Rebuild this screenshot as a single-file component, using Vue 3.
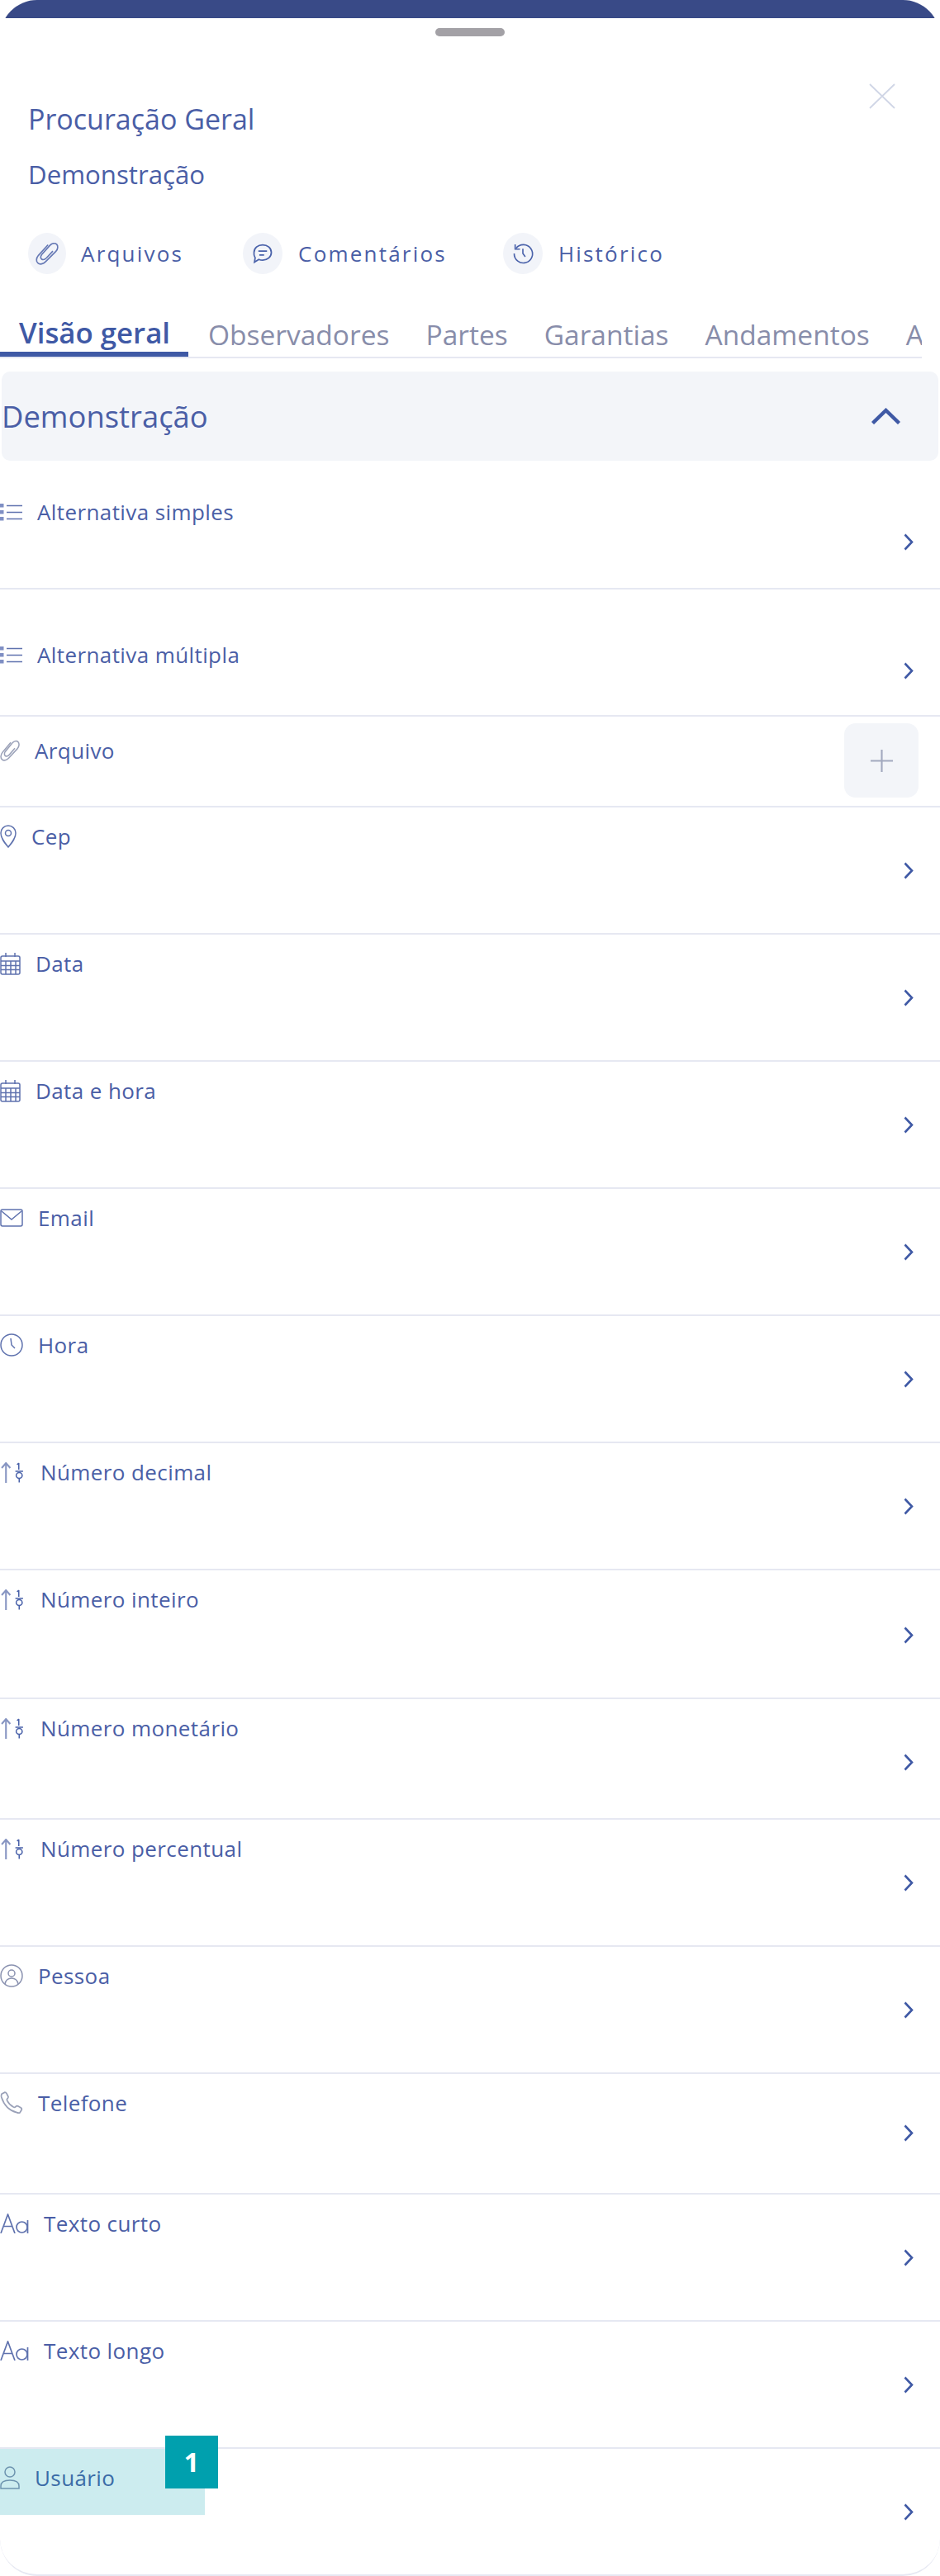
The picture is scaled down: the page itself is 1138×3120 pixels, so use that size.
<script setup>
const tabs = ['Observadores', 'Partes', 'Garantias', 'Andamentos', 'Agenda']

const boxes = {
  list: '0 0 27 21',
  clip: '0 0 24 24',
  pin: '0 0 20 28',
  calendar: '0 0 25 27',
  mail: '0 0 28 22',
  clock: '0 0 28 28',
  number: '0 0 30 25',
  person: '0 0 28 28',
  phone: '0 0 24 24',
  text: '0 0 35 24',
  user: '0 0 24 28'
}

const fields = [
  { label: 'Alternativa simples', icon: 'list', kind: 'alt first' },
  { label: 'Alternativa múltipla', icon: 'list', kind: 'alt' },
  { label: 'Arquivo', icon: 'clip', kind: 'file' },
  { label: 'Cep', icon: 'pin' },
  { label: 'Data', icon: 'calendar' },
  { label: 'Data e hora', icon: 'calendar' },
  { label: 'Email', icon: 'mail' },
  { label: 'Hora', icon: 'clock' },
  { label: 'Número decimal', icon: 'number' },
  { label: 'Número inteiro', icon: 'number', kind: 'tall' },
  { label: 'Número monetário', icon: 'number', kind: 'short' },
  { label: 'Número percentual', icon: 'number' },
  { label: 'Pessoa', icon: 'person' },
  { label: 'Telefone', icon: 'phone', kind: 'short phone' },
  { label: 'Texto curto', icon: 'text' },
  { label: 'Texto longo', icon: 'text' },
  { label: 'Usuário', icon: 'user', kind: 'last' }
]
</script>

<template>
  <div class="page">
    <div class="sheet">
      <div class="band"></div>
      <div class="handle"></div>

      <div class="head">
        <div class="names">
          <h1 class="title">Procuração Geral</h1>
          <p class="subtitle">Demonstração</p>
        </div>
        <svg class="close" viewBox="0 0 32 31" fill="none" stroke="#d0d6e6" stroke-width="1.800">
          <path d="M1 1l30 29M31 1L1 30" />
        </svg>
      </div>

      <div class="actions">
        <div class="action">
          <span class="badge b1">
            <svg viewBox="0 0 24 24" fill="none" stroke="#6578b4" stroke-width="1.400">
              <path d="M13 3L3 14C.5 17 .5 20.500 2.500 22c2 1.800 5.500 1 8-1.500L21 10c2.500-2.500 2.500-6 1-7.500-2-1.700-5-1-7 1L6.500 13c-1.500 2-1.500 4 0 5s3.500 0 5-1.500L18 9.500" />
            </svg>
          </span>
          <span>Arquivos</span>
        </div>
        <div class="action">
          <span class="badge b2">
            <svg viewBox="0 0 24 24" fill="none" stroke="#4a62aa" stroke-width="1.500">
              <path d="M12 3c5 0 9 3.500 9 8s-4 8-9 8c-1.500 0-2.800-.3-4-.8L3.500 21l.7-4.500A8 8 0 0 1 3 11c0-4.500 4-8 9-8z" />
              <path d="M7.500 9.500h9M8.500 13.500h5" />
            </svg>
          </span>
          <span>Comentários</span>
        </div>
        <div class="action">
          <span class="badge b3">
            <svg viewBox="0 0 24 24" fill="none" stroke="#4a62aa" stroke-width="1.400">
              <path d="M5 6.500A9.500 9.500 0 1 1 3 12" />
              <path d="M4 2.500v5h5" />
              <path d="M12 7v5l2.500 3.500" />
            </svg>
          </span>
          <span>Histórico</span>
        </div>
      </div>

      <div class="tabs">
        <div class="tab active">Visão geral</div>
        <div v-for="tab in tabs" :key="tab" class="tab">{{ tab }}</div>
      </div>

      <div class="section">
        <span>Demonstração</span>
        <svg class="up" viewBox="0 0 35 20" fill="none" stroke="#3f59a5" stroke-width="4.400">
          <path d="M1.500 18.500L17.500 3l16 15.500" />
        </svg>
      </div>

      <div v-for="field in fields" :key="field.label" class="row" :class="field.kind">
        <div class="label">
          <svg class="ico" :class="'ico-' + field.icon" :viewBox="boxes[field.icon]" preserveAspectRatio="none" fill="none" stroke="#5f72ae" stroke-width="1.500">
            <template v-if="field.icon === 'list'">
              <path d="M8 2.500h19M8 10.500h19M8 18.500h19" />
              <rect x="0" y="0" width="4.500" height="4.500" fill="#7f8fc4" stroke="none" />
              <rect x="0" y="8" width="4.500" height="4.500" fill="#7f8fc4" stroke="none" />
              <rect x="0" y="16" width="4.500" height="4.500" fill="#7f8fc4" stroke="none" />
            </template>
            <path v-else-if="field.icon === 'clip'" stroke="#9aa1b8" d="M13 3L3 14C.5 17 .5 20.500 2.500 22c2 1.800 5.500 1 8-1.500L21 10c2.500-2.500 2.500-6 1-7.500-2-1.700-5-1-7 1L6.500 13c-1.500 2-1.500 4 0 5s3.500 0 5-1.500L18 9.500" />
            <template v-else-if="field.icon === 'pin'">
              <path d="M10 27C5 21 1 16 1 10a9 9 0 0 1 18 0c0 6-4 11-9 17z" />
              <circle cx="10" cy="10" r="3.500" />
            </template>
            <template v-else-if="field.icon === 'calendar'">
              <rect x="1" y="4" width="23" height="22" rx="2" />
              <path d="M1 10h23M1 15.500h23M1 20.500h23M7 10v16M13 10v16M19 10v16M7 0v5M18 0v5" />
            </template>
            <template v-else-if="field.icon === 'mail'">
              <rect x="1" y="1" width="26" height="20" rx="2" />
              <path d="M2 3l12 10L26 3" />
            </template>
            <template v-else-if="field.icon === 'clock'">
              <circle cx="14" cy="14" r="13" />
              <path d="M13 6l1 8 4 4" />
            </template>
            <template v-else-if="field.icon === 'number'">
              <path d="M7 25V1M2 7l5-6 5 6" stroke="#8795c2" stroke-width="2" />
              <path d="M22 1v8M20 3l2-2" stroke="#4a62aa" />
              <path d="M18 11h9" stroke="#4a62aa" />
              <circle cx="22.500" cy="16" r="3.500" stroke="#4a62aa" />
              <path d="M22.500 19.500v5" stroke="#4a62aa" />
            </template>
            <template v-else-if="field.icon === 'person'">
              <g stroke="#8a92b0">
                <circle cx="14" cy="14" r="13" />
                <circle cx="14" cy="11" r="4" />
                <path d="M6 24c1-5 4-7 8-7s7 2 8 7" />
              </g>
            </template>
            <path v-else-if="field.icon === 'phone'" stroke="#9aa1b8" d="M2 2.500l3-1.500c1 0 1.500.5 2 1.500l1.500 3c.3 1-.2 1.500-1 2.300-.5.500-.5 1 0 2 1.500 3 3.500 5 6.500 6.500 1 .4 1.500.3 2-.2.8-.8 1.500-1.300 2.500-.8l3 1.700c1 .6 1.300 1.500.7 2.500l-1.500 2.500c-.7.500-2 .5-3.200 0C9.500 20 4 14 1.500 6c-.3-1.500-.2-2.800.5-3.500z" />
            <template v-else-if="field.icon === 'user'">
              <g stroke="#8a92b0">
                <circle cx="12" cy="7" r="6" />
                <path d="M1 27v-3c0-5 5-7 11-7s11 2 11 7v3z" />
              </g>
            </template>
            <template v-else-if="field.icon === 'text'">
              <g stroke="#5f72ae" stroke-width="1.700">
                <path d="M1 24L9.500 1 18 24M4 15.500h11" />
                <circle cx="26.500" cy="16.500" r="6.500" />
                <path d="M33.500 8v16" />
              </g>
            </template>
          </svg>
          <span>{{ field.label }}</span>
        </div>

        <div v-if="field.kind === 'file'" class="add">
          <svg viewBox="0 0 30 30" fill="none" stroke="#a3a9bf" stroke-width="2.200">
            <path d="M15 1v28M1 15h28" />
          </svg>
        </div>
        <svg v-else class="chev" viewBox="0 0 12 21" fill="none" stroke="#3f59a5" stroke-width="2.600">
          <path d="M1.500 1.500L10 10.500 1.500 19.500" />
        </svg>
      </div>

      <div class="mark"></div>
      <div class="pin-num">1</div>
    </div>
  </div>
</template>

<style>
html,
body {
  background: #fff;
}
</style>

<style scoped>
.page {
  width: 1138px;
  height: 3120px;
  overflow: hidden;
  background: #fff;
  font-family: "Open Sans", "Liberation Sans", sans-serif;
  color: #4a5ea6;
}

.sheet {
  position: relative;
  height: 3120px;
  box-sizing: border-box;
  overflow: hidden;
  border-bottom: 2px solid #e6e8f2;
  border-radius: 45px;
}

.sheet::before {
  content: "";
  position: absolute;
  top: 0;
  left: 0;
  right: 0;
  height: 70px;
  border-top: 2px solid #dfe2ec;
  border-radius: 45px;
}

.band {
  position: relative;
  height: 22px;
  background: #394a87;
}

.handle {
  width: 84px;
  height: 10px;
  margin: 12px auto 0;
  border-radius: 5px;
  background: #a3a1a6;
}

/* titulo */
.head {
  display: flex;
  justify-content: space-between;
  align-items: flex-start;
  padding: 57px 54px 0 34px;
}

.names {
  padding-top: 22px;
}

.title {
  margin: 0;
  font-size: 34px;
  line-height: 42px;
  font-weight: 400;
}

.subtitle {
  margin: 26px 0 0;
  font-size: 31.200px;
  line-height: 40px;
}

.close {
  width: 32px;
  height: 31px;
}

/* acoes */
.actions {
  display: flex;
  margin: 51px 0 0 34px;
}

.action {
  display: flex;
  align-items: center;
  font-size: 26px;
  letter-spacing: 2.200px;
}

.action:nth-child(1) {
  margin-right: 72px;
}

.action:nth-child(2) {
  margin-right: 68px;
}

.badge {
  display: flex;
  align-items: center;
  justify-content: center;
  width: 48px;
  height: 50px;
  margin-right: 19px;
  border-radius: 50%;
  background: #f2f4f9;
}

.badge svg {
  width: 28px;
  height: 30px;
}

.b1 {
  width: 46px;
  margin-right: 18px;
}

/* abas */
.tabs {
  display: flex;
  align-items: flex-end;
  gap: 44px;
  width: 1116px;
  height: 52px;
  margin-top: 48px;
  overflow: hidden;
  border-bottom: 2px solid #e6e8f2;
  font-size: 33.500px;
  font-weight: 400;
  color: #888daa;
  white-space: nowrap;
}

.tab {
  height: 52px;
  line-height: 50px;
}

.tab.active {
  box-sizing: border-box;
  flex: none;
  width: 228px;
  margin-right: -20px;
  padding-left: 23px;
  border-bottom: 6px solid #3f59a5;
  font-size: 34.800px;
  line-height: 46px;
  font-weight: 600;
  color: #3f59a5;
}

/* secao */
.section {
  display: flex;
  justify-content: space-between;
  align-items: center;
  height: 108px;
  margin: 16px 2px 0;
  padding: 0 46px 0 0;
  border-radius: 10px;
  background: #f3f5f9;
  font-size: 36.400px;
}

.up {
  width: 35px;
  height: 20px;
}

/* linhas */
.row {
  display: flex;
  justify-content: space-between;
  align-items: flex-start;
  box-sizing: border-box;
  height: 154px;
  padding-right: 32px;
  border-bottom: 2px solid #e6e8f2;
}

.label {
  display: flex;
  align-items: center;
  gap: 18px;
  height: 34px;
  margin-top: 18px;
  font-size: 26px;
  letter-spacing: .4px;
}

.ico {
  flex: none;
}

.ico-list {
  width: 27px;
  height: 21px;
}

.ico-clip {
  width: 24px;
  height: 26px;
}

.ico-pin {
  width: 20px;
  height: 28px;
}

.ico-calendar {
  width: 25px;
  height: 27px;
}

.ico-mail {
  width: 28px;
  height: 22px;
}

.ico-clock,
.ico-person,
.ico-phone {
  width: 28px;
  height: 28px;
}

.ico-number {
  width: 31px;
  height: 25px;
}

.ico-text {
  width: 35px;
  height: 24px;
}

.ico-user {
  width: 24px;
  height: 28px;
}

.chev {
  width: 12px;
  height: 21px;
  margin-top: 66px;
}

.alt .label {
  margin-top: 62px;
}

.alt .chev {
  margin-top: 88px;
}

.first {
  height: 156px;
}

.first .label {
  margin-top: 45px;
}

.file {
  height: 110px;
}

.file .label {
  margin-top: 24px;
}

.add {
  display: flex;
  align-items: center;
  justify-content: center;
  width: 90px;
  height: 90px;
  margin: 8px -6px 0 0;
  border-radius: 14px;
  background: #f3f5f9;
}

.add svg {
  width: 29px;
  height: 29px;
}

.short {
  height: 146px;
}

.tall {
  height: 156px;
}

.tall .chev {
  margin-top: 68px;
}

.phone .chev {
  margin-top: 61px;
}

.last {
  height: 152px;
  border-bottom: 0;
}

/* destaque */
.mark {
  position: absolute;
  left: 0;
  top: 2966px;
  width: 248px;
  height: 80px;
  background: #00a0ae;
  opacity: .2;
}

.pin-num {
  position: absolute;
  left: 200px;
  top: 2950px;
  width: 64px;
  height: 64px;
  background: #00a0ae;
  color: #fff;
  font-size: 32px;
  font-weight: 700;
  line-height: 64px;
  text-align: center;
}
</style>
